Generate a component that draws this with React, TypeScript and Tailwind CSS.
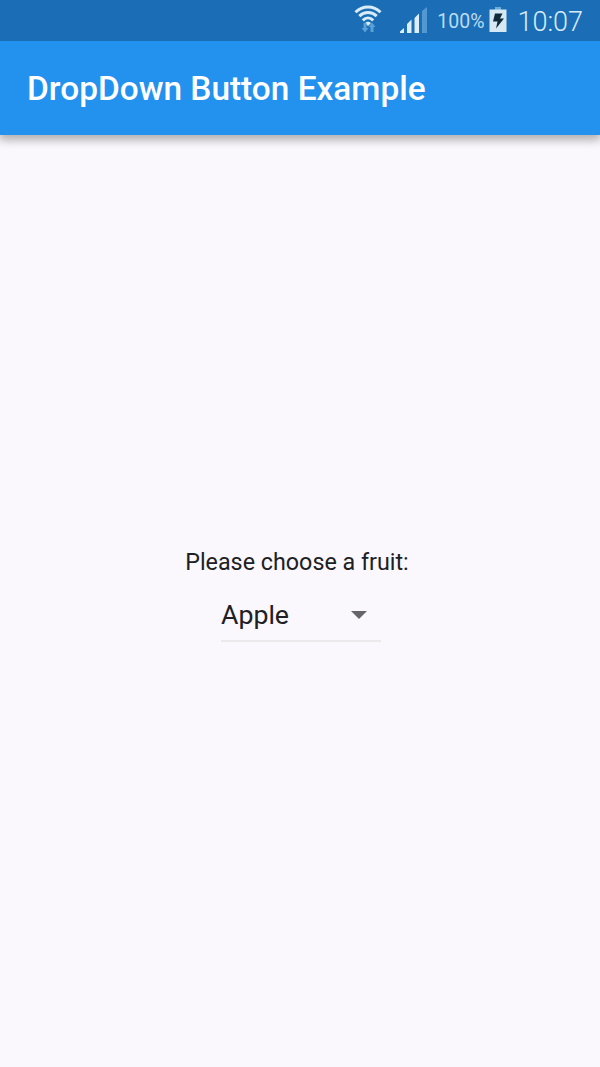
function WifiIcon() {
  return (
    <svg className="h-[30px] w-[30px] shrink-0" viewBox="0 0 30 30" fill="none">
      <g stroke="#d9edf9" strokeWidth="3">
        <path d="M1.500 9.200C8.500 2.200 19.500 2.200 26.500 9.200" />
        <path d="M5.300 13.200C10.300 8.400 17.700 8.400 22.700 13.200" />
        <path d="M8.800 17.300C12 14.200 16 14.200 19.200 17.300" />
      </g>
      <path d="M11 20Q14 17.400 17 20L14 23Z" fill="#d9edf9" />
      <path d="M9.500 20v5H7.500L11 29.500l3.500-4.500H12.500v-5ZM16.500 29v-5h-2L18 19.500l3.500 4.500H19.500v5Z" fill="#5ba1d8" />
    </svg>
  );
}

function SignalIcon() {
  return (
    <svg className="h-[27px] w-[28px] shrink-0" viewBox="0 0 28 27">
      <path d="M0 26v-1.500l4-3.500v5ZM7 26V17l4.500-4.500V26ZM14.500 26V11L19 6.500V26Z" fill="#deeef7" />
      <path d="M22 26V4L27 0v26Z" fill="#5399d1" />
    </svg>
  );
}

function BatteryIcon() {
  return (
    <svg className="h-[26px] w-[18px] shrink-0" viewBox="0 0 18 26">
      <path d="M6 0h6v3H6Z" fill="#69acd9" />
      <path d="M.5 2.500h17V25H.5Z" fill="#d5e8f3" />
      <path d="M6 6.500h7.500l-2.500 5h4L7 21.500l1.500-7H4Z" fill="#102a3c" />
    </svg>
  );
}

export default function App() {
  return (
    <div className="flex h-[1067px] w-[600px] flex-col overflow-hidden bg-[#faf8fc] font-['Roboto',sans-serif] text-[#202024]">
      <header className="shrink-0 bg-[#2292ee] shadow-[0_4px_9px_1px_rgba(0,0,0,0.3)]">
        <div className="flex h-[41px] items-start justify-end bg-[#1b6db5] pr-[17px] text-[#b9dcf3]">
          <div className="mr-[16px] pt-[3px]">
            <WifiIcon />
          </div>
          <div className="mr-[9px] pt-[7px]">
            <SignalIcon />
          </div>
          <span className="mr-[5px] pt-[8px] text-[19.500px] leading-[28px]">100%</span>
          <div className="mr-[10px] pt-[7px]">
            <BatteryIcon />
          </div>
          <time className="pt-[6px] text-[27px] font-light leading-[33px] text-[#d8edf9]">10:07</time>
        </div>
        <div className="flex h-[94px] items-center pl-[27px] pt-[2px]">
          <h1 className="whitespace-nowrap text-[33.400px] font-medium leading-[40px] text-white">DropDown Button Example</h1>
        </div>
      </header>
      <main className="flex flex-1 flex-col items-center pt-[414px]">
        <p className="mr-[6px] whitespace-nowrap text-[23.300px] leading-[27px]">Please choose a fruit:</p>
        <button
          type="button"
          className="mt-[13px] ml-[2px] flex h-[53px] w-[160px] items-center justify-between border-b-2 border-[#ece9ed] pr-[14px] text-[26.700px]"
        >
          <span className="pt-[2px]">Apple</span>
          <svg className="h-[8px] w-[16px]" viewBox="0 0 16 8">
            <path d="M0 0h16L8 8Z" fill="#666569" />
          </svg>
        </button>
      </main>
    </div>
  );
}
